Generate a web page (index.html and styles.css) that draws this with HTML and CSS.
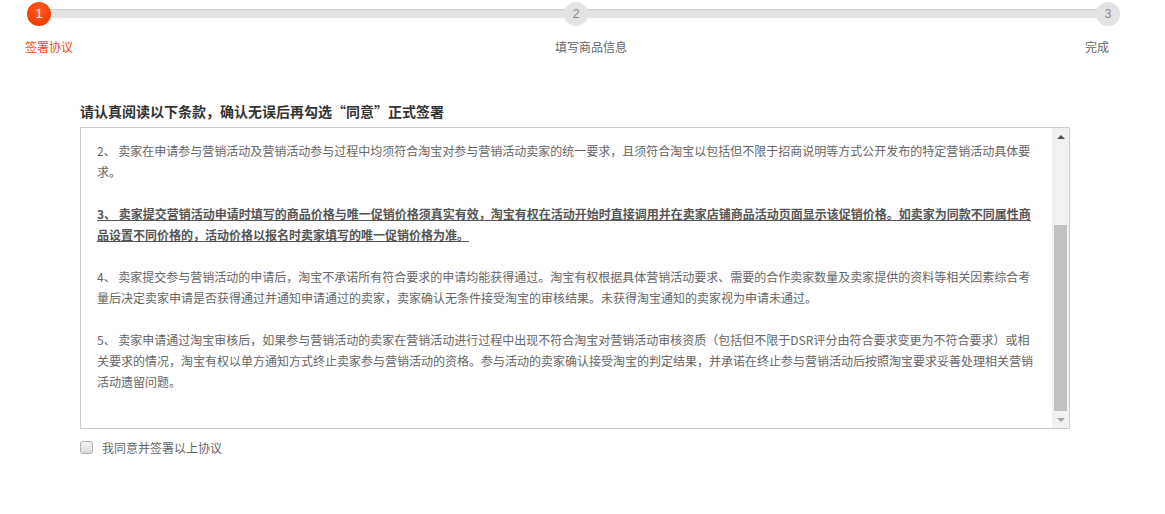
FILE: index.html
```html
<!DOCTYPE html>
<html lang="zh-CN">
<head>
<meta charset="utf-8">
<title>签署协议</title>
<link rel="stylesheet" href="styles.css">
</head>
<body>
<div class="page">
  <div class="steps">
    <div class="track">
      <span class="dot dot-1 is-active">1</span>
      <span class="dot dot-2">2</span>
      <span class="dot dot-3">3</span>
    </div>
    <div class="labels">
      <span class="label label-1 is-active">签署协议</span>
      <span class="label label-2">填写商品信息</span>
      <span class="label label-3">完成</span>
    </div>
  </div>

  <div class="agreement">
    <h2 class="title">请认真阅读以下条款，确认无误后再勾选“同意”正式签署</h2>
    <div class="terms">
      <div class="terms-body">
        <p>2、 卖家在申请参与营销活动及营销活动参与过程中均须符合淘宝对参与营销活动卖家的统一要求，且须符合淘宝以包括但不限于招商说明等方式公开发布的特定营销活动具体要求。</p>
        <p class="strong">3、 卖家提交营销活动申请时填写的商品价格与唯一促销价格须真实有效，淘宝有权在活动开始时直接调用并在卖家店铺商品活动页面显示该促销价格。如卖家为同款不同属性商品设置不同价格的，活动价格以报名时卖家填写的唯一促销价格为准。</p>
        <p>4、 卖家提交参与营销活动的申请后，淘宝不承诺所有符合要求的申请均能获得通过。淘宝有权根据具体营销活动要求、需要的合作卖家数量及卖家提供的资料等相关因素综合考量后决定卖家申请是否获得通过并通知申请通过的卖家，卖家确认无条件接受淘宝的审核结果。未获得淘宝通知的卖家视为申请未通过。</p>
        <p>5、 卖家申请通过淘宝审核后，如果参与营销活动的卖家在营销活动进行过程中出现不符合淘宝对营销活动审核资质（包括但不限于DSR评分由符合要求变更为不符合要求）或相关要求的情况，淘宝有权以单方通知方式终止卖家参与营销活动的资格。参与活动的卖家确认接受淘宝的判定结果，并承诺在终止参与营销活动后按照淘宝要求妥善处理相关营销活动遗留问题。</p>
      </div>
      <div class="scrollbar">
        <div class="sb-btn sb-up"></div>
        <div class="sb-track"><div class="sb-thumb"></div></div>
        <div class="sb-btn sb-down"></div>
      </div>
    </div>
    <label class="agree">
      <input type="checkbox" class="agree-box">
      <span class="agree-text">我同意并签署以上协议</span>
    </label>
  </div>
</div>
</body>
</html>
```

FILE: styles.css
```css
html, body {
  margin: 0;
  padding: 0;
  background: #fff;
}

body {
  font-family: "Noto Sans CJK SC", "Microsoft YaHei", sans-serif;
  font-size: 12px;
  color: #666;
}

.page {
  width: 1165px;
}

/* ---------- steps ---------- */
.steps {
  padding-top: 2px;
}

.track {
  position: relative;
  display: flex;
  align-items: center;
  height: 24px;
}

.track::before {
  content: "";
  position: absolute;
  left: 39px;
  width: 1069px;
  top: 7px;
  height: 9px;
  background: #e3e3e3;
  box-shadow: inset 0 1px 1px #cfcfcf;
}

.dot {
  position: relative;
  z-index: 1;
  width: 24px;
  height: 24px;
  border-radius: 50%;
  background: #e3e3e3;
  color: #888;
  font-family: "Liberation Sans", Arial, sans-serif;
  font-size: 12px;
  line-height: 24px;
  text-align: center;
}

.dot.is-active {
  background: radial-gradient(circle at 50% 35%, #ff5a1c 0%, #f43f00 70%, #e63a00 100%);
  color: #fff;
  font-size: 13px;
}

.dot-1 { margin-left: 27px; }
.dot-2 { margin-left: 513px; }
.dot-3 { margin-left: 508px; }

.labels {
  display: flex;
  margin-top: 13px;
  line-height: 16px;
}

.label {
  color: #666;
  font-size: 12px;
}

.label.is-active { color: #f24a10; }
.label-1 { margin-left: 25px; }
.label-2 { margin-left: 482px; }
.label-3 { margin-left: 458px; }

/* ---------- agreement ---------- */
.agreement {
  margin: 46px 0 0 80px;
  width: 990px;
}

.title {
  margin: 0 0 6px;
  font-size: 14px;
  line-height: 20px;
  font-weight: bold;
  color: #333;
}

.terms {
  display: flex;
  height: 300px;
  border: 1px solid #cccccc;
}

.terms-body {
  flex: 1;
  overflow: hidden;
  padding: 12px 18px 0 16px;
}

.terms-body p {
  margin: 0 0 21px;
  line-height: 21px;
  font-size: 12px;
  color: #666;
}

.terms-body p.strong {
  font-weight: bold;
  text-decoration: underline;
  color: #555;
}

/* fake native scrollbar */
.scrollbar {
  width: 17px;
  display: flex;
  flex-direction: column;
  background: #f1f1f1;
}

.sb-btn {
  height: 17px;
  display: flex;
  align-items: center;
  justify-content: center;
}

.sb-up::after {
  content: "";
  width: 0;
  height: 0;
  border-left: 4px solid transparent;
  border-right: 4px solid transparent;
  border-bottom: 4px solid #505050;
}

.sb-down::after {
  content: "";
  width: 0;
  height: 0;
  border-left: 4px solid transparent;
  border-right: 4px solid transparent;
  border-top: 4px solid #a3a3a3;
}

.sb-track {
  flex: 1;
  display: flex;
  flex-direction: column;
  justify-content: flex-end;
}

.sb-thumb {
  height: 186px;
  margin: 0 2px;
  background: #c1c1c1;
}

/* ---------- agree ---------- */
.agree {
  display: flex;
  align-items: center;
  margin-top: 8px;
  height: 20px;
  cursor: pointer;
}

.agree-box {
  appearance: none;
  -webkit-appearance: none;
  width: 13px;
  height: 13px;
  margin: 0;
  border: 1px solid #b0b0b0;
  border-radius: 3px;
  background: linear-gradient(#f4f4f4, #d9d9d9);
  box-sizing: border-box;
}

.agree-text {
  margin-left: 9px;
  color: #666;
  font-size: 12px;
}
```
